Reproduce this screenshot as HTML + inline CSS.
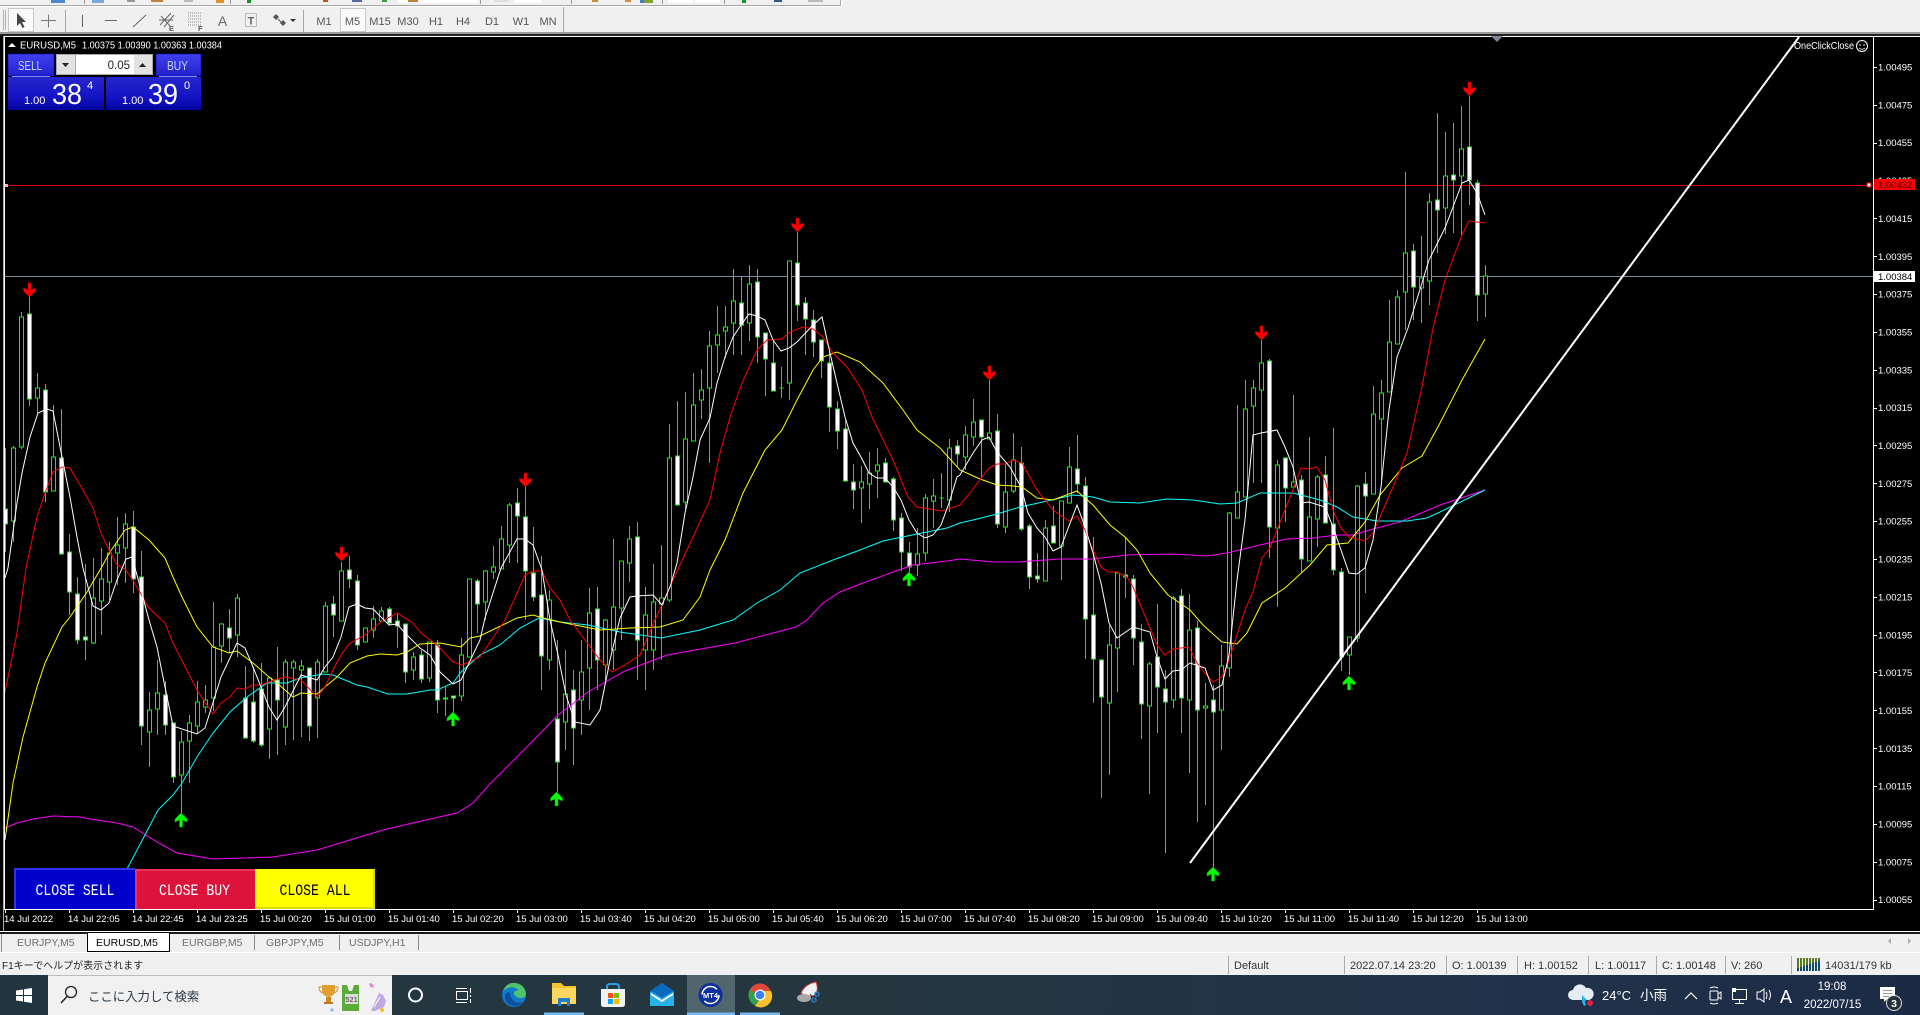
<!DOCTYPE html>
<html><head><meta charset="utf-8"><title>EURUSD,M5</title>
<style>
html,body{margin:0;padding:0;background:#f0f0f0;width:1920px;height:1015px;overflow:hidden}
svg{display:block;position:absolute;left:0;top:0}
text{font-family:"Liberation Sans","Noto Sans CJK JP",sans-serif}
.ax text,.ax{fill:#fff;font-size:9.5px}
.tb{fill:#555;font-size:11px;text-anchor:middle}
.st{fill:#333;font-size:11px}
.tab{fill:#6d6d6d;font-size:10.5px}
.mono{font-family:"Liberation Mono",monospace;font-size:15.5px}
</style></head><body>
<svg width="1920" height="1015" viewBox="0 0 1920 1015" xmlns="http://www.w3.org/2000/svg">
<defs>
<clipPath id="cc"><rect x="5" y="37" width="1868" height="872"/></clipPath>
<linearGradient id="gu" x1="0" y1="0" x2="0" y2="1"><stop offset="0" stop-color="#4040f0"/><stop offset="1" stop-color="#2222cc"/></linearGradient>
<linearGradient id="gl" x1="0" y1="0" x2="0" y2="1"><stop offset="0" stop-color="#2626cc"/><stop offset=".6" stop-color="#1414c4"/><stop offset="1" stop-color="#0404a0"/></linearGradient>
<linearGradient id="tk" x1="0" y1="0" x2="1" y2="0"><stop offset="0" stop-color="#223540"/><stop offset=".45" stop-color="#25363f"/><stop offset=".75" stop-color="#21344a"/><stop offset="1" stop-color="#1c2a46"/></linearGradient>
</defs>

<!-- top clipped toolbar -->
<rect x="0" y="0" width="1920" height="36" fill="#f0f0f0"/>
<g>
<rect x="51" y="0" width="14" height="3" fill="#4a8ad0"/><rect x="92" y="0" width="12" height="3" fill="#7aa8d8"/>
<rect x="127" y="0" width="8" height="2" fill="#999"/><rect x="151" y="0" width="12" height="2" fill="#c08040"/>
<rect x="184" y="0" width="9" height="2" fill="#bbb"/><rect x="216" y="0" width="8" height="3" fill="#e09030"/>
<rect x="84" y="0" width="1" height="4" fill="#999"/><rect x="230" y="0" width="1" height="4" fill="#999"/>
<rect x="247" y="0" width="4" height="3" fill="#0a9a20"/><rect x="323" y="0" width="5" height="2" fill="#c05020"/>
<rect x="352" y="0" width="10" height="2" fill="#556a9a"/><rect x="382" y="0" width="5" height="2" fill="#30a040"/>
<rect x="398" y="0" width="80" height="3" fill="#fff"/><rect x="408" y="0" width="10" height="2" fill="#c08030"/>
<rect x="480" y="0" width="1" height="4" fill="#999"/><rect x="494" y="0" width="14" height="2" fill="#ddd"/><rect x="515" y="0" width="26" height="3" fill="#fff"/>
<rect x="571" y="0" width="1" height="4" fill="#999"/><rect x="592" y="0" width="6" height="2" fill="#c09040"/><rect x="625" y="0" width="6" height="2" fill="#d09040"/>
<rect x="640" y="0" width="4" height="3" fill="#3a80c8"/><rect x="644" y="0" width="9" height="3" fill="#80a030"/>
<rect x="662" y="0" width="1" height="4" fill="#999"/><rect x="668" y="0" width="25" height="3" fill="#fff"/><rect x="695" y="0" width="25" height="3" fill="#fff"/>
<rect x="724" y="0" width="1" height="4" fill="#999"/><rect x="742" y="0" width="4" height="3" fill="#0a9a20"/><rect x="774" y="0" width="8" height="2" fill="#2a5a90"/><rect x="808" y="0" width="15" height="2" fill="#bbb"/>
<path d="M0 5.5H840.5V0" fill="none" stroke="#a8a8a8"/><path d="M0 6.5H841.5V0" fill="none" stroke="#fff"/>
</g>
<!-- second toolbar -->
<rect x="3" y="10" width="1" height="20" fill="#b0b0b0"/><rect x="5" y="10" width="1" height="20" fill="#b0b0b0"/>
<rect x="8.5" y="8.5" width="25" height="23" fill="#fafafa" stroke="#c8c8c8"/>
<path d="M17 13V26L20 23L22.500 28L24.500 27L22 22H26Z" fill="#444"/>
<path d="M48.500 14.500V27.500M41 20.500H56" stroke="#777" fill="none"/>
<rect x="65" y="10" width="1" height="22" fill="#a8a8a8"/>
<path d="M82.500 15V27" stroke="#666"/><path d="M105 20.500H117" stroke="#666"/><path d="M133 27L146 15" stroke="#666"/>
<path d="M160 25L171 13M164 27L174 15M161 16L170 26M159 20L173 20" stroke="#666" fill="none"/><text x="169" y="31" font-size="7.500" font-weight="bold" fill="#555">E</text>
<path d="M188 13h14M188 16h14M188 19h14M188 22h14M188 25h14" stroke="#888" stroke-dasharray="1 1"/><text x="198" y="31" font-size="7.500" font-weight="bold" fill="#555">F</text>
<text x="222.500" y="26" font-size="14" fill="#666" text-anchor="middle">A</text>
<rect x="245.500" y="13.500" width="11" height="13" fill="none" stroke="#888" stroke-dasharray="1 1"/><text x="251" y="24.500" font-size="11" fill="#666" font-weight="bold" text-anchor="middle">T</text>
<path d="M276 14l3 3-3 3-3-3zM283 20l3 3-3 3-3-3z" fill="#555"/><path d="M278 19L283 24" stroke="#555"/><path d="M290 19h6l-3 3z" fill="#333"/>
<rect x="303" y="10" width="1" height="22" fill="#a8a8a8"/>
<rect x="340.500" y="8.500" width="25" height="23" fill="#fafafa" stroke="#c8c8c8"/>
<g class="tb"><text x="324" y="25">M1</text><text x="352.500" y="25">M5</text><text x="380" y="25">M15</text><text x="408" y="25">M30</text><text x="436" y="25">H1</text><text x="463" y="25">H4</text><text x="492" y="25">D1</text><text x="521" y="25">W1</text><text x="548" y="25">MN</text></g>
<rect x="563" y="7" width="1" height="25" fill="#a8a8a8"/>
<rect x="0" y="32" width="1920" height="2" fill="#9a9a9a"/>
<rect x="0" y="34" width="1920" height="2" fill="#222"/>

<!-- chart -->
<rect x="0" y="36" width="1920" height="897" fill="#000"/>
<rect x="3" y="36" width="1" height="896" fill="#aaa"/>
<rect x="4" y="36" width="1916" height="1" fill="#fff"/>
<rect x="4" y="36" width="1" height="874" fill="#fff"/>
<rect x="4" y="909" width="1870" height="1" fill="#fff"/>
<rect x="1873" y="36" width="1" height="874" fill="#fff"/>
<rect x="0" y="931" width="1920" height="1" fill="#fff"/>

<g clip-path="url(#cc)">
<rect x="5" y="276" width="1868" height="1" fill="#7f8c99"/>
<rect x="5" y="185" width="1868" height="1" fill="#e00000"/>

<path fill="none" stroke="#1ee01e" d="M5.5 448V552M13.5 446V542M21.5 312V449M29.5 297V406M37.5 373V413M45.5 384V502M53.5 405V491M61.5 409V554M69.5 534V615M77.5 577V644M85.5 564V660M93.5 558V644M101.5 548V635M109.5 542V600M117.5 517V585M125.5 513V583M133.5 511V593M141.5 551V745M149.5 692V767M157.5 660V735M165.5 681V735M173.5 723V783M181.5 731V813M189.5 715V783M197.5 681V733M205.5 685V713M213.5 602V711M221.5 623V663M229.5 609V653M237.5 594V657M245.5 666V738M253.5 667V743M261.5 663V747M269.5 677V759M277.5 647V755M285.5 659V745M293.5 660V740M301.5 660V737M309.5 668V741M317.5 659V738M325.5 602V672M333.5 596V637M341.5 562V621M349.5 556V588M357.5 575V650M365.5 628V642M373.5 606V638M381.5 607V621M389.5 607V625M397.5 613V648M405.5 624V683M413.5 652V680M421.5 650V683M429.5 642V682M437.5 640V713M445.5 687V716M453.5 696V712M461.5 638V701M469.5 579V657M477.5 579V633M485.5 570V620M493.5 546V579M501.5 526V569M509.5 503V563M517.5 488V563M525.5 487V620M533.5 527V601M541.5 556V690M549.5 590V670M557.5 640V792M565.5 650V750M573.5 670V765M581.5 640V735M589.5 588V710M597.5 587V690M605.5 619V680M613.5 539V670M621.5 561V640M629.5 526V582M637.5 522V680M645.5 587V690M653.5 564V670M661.5 545V660M669.5 424V602M677.5 401V505M685.5 392V509M693.5 373V441M701.5 369V419M709.5 331V463M717.5 306V373M725.5 306V358M733.5 269V355M741.5 276V355M749.5 265V341M757.5 269V363M765.5 333V396M773.5 340V391M781.5 367V398M789.5 261V400M797.5 232V321M805.5 297V355M813.5 310V357M821.5 340V378M829.5 350V432M837.5 401V449M845.5 420V481M853.5 464V509M861.5 466V523M869.5 452V509M877.5 448V498M885.5 458V482M893.5 477V531M901.5 513V571M909.5 542V572M917.5 528V576M925.5 494V561M933.5 479V528M941.5 473V508M949.5 439V512M957.5 440V467M965.5 426V470M973.5 399V446M981.5 420V478M989.5 380V439M997.5 414V528M1005.5 464V533M1013.5 433V493M1021.5 447V531M1029.5 524V589M1037.5 553V583M1045.5 520V581M1053.5 506V543M1061.5 501V580M1069.5 447V503M1077.5 435V493M1085.5 477V659M1093.5 537V703M1101.5 659V798M1109.5 625V775M1117.5 573V692M1125.5 537V598M1133.5 575V665M1141.5 624V739M1149.5 662V794M1157.5 604V733M1165.5 670V853M1173.5 596V708M1181.5 589V733M1189.5 594V773M1197.5 621V822M1205.5 683V805M1213.5 685V867M1221.5 645V750M1229.5 512V677M1237.5 405V518M1245.5 380V497M1253.5 380V483M1261.5 340V483M1269.5 359V558M1277.5 460V607M1285.5 458V522M1293.5 395V487M1301.5 475V572M1309.5 437V561M1317.5 475V547M1325.5 456V523M1333.5 428V575M1341.5 568V671M1349.5 637V675M1357.5 485V642M1365.5 472V593M1373.5 386V494M1381.5 380V480M1389.5 300V392M1397.5 290V344M1405.5 172V330M1413.5 244V320M1421.5 236V323M1429.5 193V305M1437.5 113V253M1445.5 132V234M1453.5 123V233M1461.5 106V235M1469.5 96V205M1477.5 180V321M1485.5 265V317"/>

<!-- hollow bodies -->
<path fill="#000" stroke="#12f012" d="M11.5 448H15.5V521H11.5ZM19.5 317H23.5V447H19.5ZM35.5 388H39.5V398H35.5ZM51.5 457H55.5V491H51.5ZM91.5 598H95.5V643H91.5ZM99.5 579H103.5V601H99.5ZM107.5 553H111.5V582H107.5ZM115.5 545H119.5V553H115.5ZM123.5 524H127.5V548H123.5ZM147.5 710H151.5V732H147.5ZM155.5 693H159.5V709H155.5ZM179.5 742H183.5V775H179.5ZM187.5 723H191.5V741H187.5ZM195.5 702H199.5V726H195.5ZM203.5 700H207.5V707H203.5ZM211.5 647H215.5V698H211.5ZM219.5 624H223.5V646H219.5ZM235.5 598H239.5V635H235.5ZM267.5 678H271.5V729H267.5ZM283.5 662H287.5V727H283.5ZM291.5 662H295.5V668H291.5ZM299.5 666H303.5V670H299.5ZM315.5 662H319.5V698H315.5ZM323.5 606H327.5V672H323.5ZM339.5 571H343.5V621H339.5ZM363.5 628H367.5V642H363.5ZM371.5 619H375.5V630H371.5ZM379.5 611H383.5V621H379.5ZM411.5 657H415.5V670H411.5ZM427.5 642H431.5V678H427.5ZM443.5 698H447.5V699H443.5ZM459.5 655H463.5V696H459.5ZM467.5 579H471.5V657H467.5ZM483.5 571H487.5V602H483.5ZM491.5 567H495.5V572H491.5ZM499.5 539H503.5V569H499.5ZM507.5 505H511.5V545H507.5ZM547.5 600H551.5V660H547.5ZM563.5 694H567.5V722H563.5ZM579.5 672H583.5V700H579.5ZM587.5 613H591.5V668H587.5ZM603.5 620H607.5V665H603.5ZM611.5 607H615.5V650H611.5ZM619.5 561H623.5V608H619.5ZM627.5 539H631.5V563H627.5ZM643.5 615H647.5V650H643.5ZM651.5 602H655.5V650H651.5ZM659.5 598H663.5V604H659.5ZM667.5 458H671.5V600H667.5ZM683.5 439H687.5V502H683.5ZM691.5 405H695.5V441H691.5ZM699.5 390H703.5V400H699.5ZM707.5 346H711.5V388H707.5ZM715.5 335H719.5V345H715.5ZM723.5 327H727.5V331H723.5ZM731.5 301H735.5V323H731.5ZM747.5 284H751.5V323H747.5ZM779.5 388H783.5V388H779.5ZM787.5 261H791.5V383H787.5ZM859.5 482H863.5V488H859.5ZM867.5 473H871.5V484H867.5ZM875.5 465H879.5V471H875.5ZM915.5 554H919.5V565H915.5ZM923.5 498H927.5V553H923.5ZM931.5 496H935.5V501H931.5ZM939.5 498H943.5V498H939.5ZM947.5 448H951.5V500H947.5ZM963.5 435H967.5V457H963.5ZM971.5 422H975.5V437H971.5ZM987.5 433H991.5V439H987.5ZM1003.5 492H1007.5V527H1003.5ZM1011.5 460H1015.5V491H1011.5ZM1043.5 528H1047.5V581H1043.5ZM1059.5 501H1063.5V546H1059.5ZM1067.5 467H1071.5V503H1067.5ZM1107.5 645H1111.5V703H1107.5ZM1115.5 573H1119.5V648H1115.5ZM1147.5 664H1151.5V706H1147.5ZM1171.5 598H1175.5V700H1171.5ZM1187.5 630H1191.5V700H1187.5ZM1203.5 706H1207.5V708H1203.5ZM1219.5 666H1223.5V710H1219.5ZM1227.5 513H1231.5V668H1227.5ZM1235.5 492H1239.5V518H1235.5ZM1243.5 409H1247.5V497H1243.5ZM1251.5 388H1255.5V406H1251.5ZM1259.5 363H1263.5V390H1259.5ZM1275.5 465H1279.5V528H1275.5ZM1291.5 482H1295.5V487H1291.5ZM1307.5 517H1311.5V561H1307.5ZM1315.5 477H1319.5V519H1315.5ZM1347.5 637H1351.5V655H1347.5ZM1355.5 486H1359.5V638H1355.5ZM1371.5 414H1375.5V494H1371.5ZM1379.5 393H1383.5V419H1379.5ZM1387.5 342H1391.5V392H1387.5ZM1395.5 297H1399.5V344H1395.5ZM1403.5 253H1407.5V292H1403.5ZM1419.5 278H1423.5V288H1419.5ZM1427.5 202H1431.5V281H1427.5ZM1443.5 176H1447.5V208H1443.5ZM1459.5 149H1463.5V176H1459.5ZM1483.5 276H1487.5V294H1483.5Z"/>
<!-- filled bodies -->
<path fill="#fff" stroke="#12f012" d="M3.5 509H7.5V524H3.5ZM27.5 314H31.5V399H27.5ZM43.5 390H47.5V492H43.5ZM59.5 458H63.5V554H59.5ZM67.5 552H71.5V592H67.5ZM75.5 594H79.5V640H75.5ZM83.5 637H87.5V640H83.5ZM131.5 527H135.5V579H131.5ZM139.5 577H143.5V726H139.5ZM163.5 695H167.5V725H163.5ZM171.5 723H175.5V777H171.5ZM227.5 628H231.5V638H227.5ZM243.5 698H247.5V738H243.5ZM251.5 702H255.5V741H251.5ZM259.5 689H263.5V745H259.5ZM275.5 680H279.5V700H275.5ZM307.5 668H311.5V726H307.5ZM331.5 604H335.5V615H331.5ZM347.5 570H351.5V579H347.5ZM355.5 581H359.5V645H355.5ZM387.5 609H391.5V623H387.5ZM395.5 621H399.5V626H395.5ZM403.5 624H407.5V672H403.5ZM419.5 655H423.5V679H419.5ZM435.5 645H439.5V700H435.5ZM451.5 696H455.5V698H451.5ZM475.5 581H479.5V604H475.5ZM515.5 503H519.5V516H515.5ZM523.5 517H527.5V571H523.5ZM531.5 573H535.5V597H531.5ZM539.5 595H543.5V656H539.5ZM555.5 719H559.5V762H555.5ZM571.5 690H575.5V728H571.5ZM595.5 609H599.5V660H595.5ZM635.5 537H639.5V640H635.5ZM675.5 456H679.5V505H675.5ZM739.5 303H743.5V325H739.5ZM755.5 282H759.5V337H755.5ZM763.5 333H767.5V359H763.5ZM771.5 363H775.5V391H771.5ZM795.5 263H799.5V305H795.5ZM803.5 303H807.5V319H803.5ZM811.5 320H815.5V342H811.5ZM819.5 340H823.5V361H819.5ZM827.5 363H831.5V407H827.5ZM835.5 409H839.5V431H835.5ZM843.5 429H847.5V481H843.5ZM851.5 482H855.5V490H851.5ZM883.5 463H887.5V482H883.5ZM891.5 479H895.5V520H891.5ZM899.5 518H903.5V552H899.5ZM907.5 553H911.5V567H907.5ZM955.5 446H959.5V454H955.5ZM979.5 420H983.5V437H979.5ZM995.5 431H999.5V524H995.5ZM1019.5 463H1023.5V529H1019.5ZM1027.5 526H1031.5V577H1027.5ZM1035.5 576H1039.5V579H1035.5ZM1051.5 526H1055.5V543H1051.5ZM1075.5 469H1079.5V484H1075.5ZM1083.5 486H1087.5V619H1083.5ZM1091.5 615H1095.5V659H1091.5ZM1099.5 660H1103.5V697H1099.5ZM1123.5 575H1127.5V577H1123.5ZM1131.5 579H1135.5V638H1131.5ZM1139.5 642H1143.5V704H1139.5ZM1155.5 657H1159.5V687H1155.5ZM1163.5 689H1167.5V702H1163.5ZM1179.5 596H1183.5V698H1179.5ZM1195.5 628H1199.5V710H1195.5ZM1211.5 700H1215.5V712H1211.5ZM1267.5 361H1271.5V527H1267.5ZM1283.5 458H1287.5V488H1283.5ZM1299.5 480H1303.5V559H1299.5ZM1323.5 475H1327.5V523H1323.5ZM1331.5 524H1335.5V570H1331.5ZM1339.5 572H1343.5V657H1339.5ZM1363.5 484H1367.5V496H1363.5ZM1411.5 251H1415.5V287H1411.5ZM1435.5 200H1439.5V210H1435.5ZM1451.5 175H1455.5V180H1451.5ZM1467.5 147H1471.5V180H1467.5ZM1475.5 183H1479.5V295H1475.5Z"/>

<!-- MAs -->
<polyline fill="none" stroke="#ff00ff" points="5,828 17,823 33,819 53,816 80,817 90,819 117,823 133,827 157,842 177,853 213,859 273,857 317,850 340,843 383,830 417,822 457,813 473,803 490,784 527,747 557,716 588,692 625,671 667,655 735,643 796,627 807,620 823,603 840,592 863,583 893,572 913,565 947,561 960,559 993,562 1017,562 1060,559 1093,559 1127,555 1173,554 1207,556 1227,553 1260,545 1287,539 1313,538 1337,535 1353,535 1377,528 1400,522 1440,505 1485,490"/>
<polyline fill="none" stroke="#00ffff" points="127,869 145,835 158,810 173,795 182,783 197,757 213,733 230,712 247,697 267,683 287,683 300,678 323,674 333,675 357,685 367,687 388,694 407,694 430,690 437,690 453,683 461,672 480,655 500,645 520,628 539,618 560,622 588,625 620,632 661,638 700,630 733,620 757,603 780,590 800,573 833,560 860,550 883,541 917,534 947,528 960,523 973,520 997,514 1020,507 1043,502 1073,495 1093,497 1110,502 1140,503 1167,499 1193,500 1220,504 1237,503 1260,493 1293,493 1320,500 1337,507 1353,517 1377,521 1407,521 1427,518 1440,512 1485,490"/>
<polyline fill="none" stroke="#ffff00" points="5,840 13,783 23,737 37,687 45,663 62,627 70,617 87,592 100,570 110,552 125,530 133,527 149,540 165,558 173,577 182,597 197,627 213,647 229,653 237,651 253,663 269,677 277,683 293,697 301,693 317,694 325,687 337,677 350,663 367,656 380,654 397,655 407,652 420,644 440,643 461,647 470,638 480,636 517,618 533,615 543,618 560,622 600,630 630,628 660,627 683,620 700,597 710,570 725,540 743,493 765,450 782,430 797,400 813,370 823,357 837,352 860,362 883,383 903,410 917,430 940,448 960,470 980,479 997,485 1013,486 1022,487 1037,498 1053,500 1077,491 1093,505 1110,525 1125,537 1137,550 1150,573 1168,595 1190,610 1203,625 1222,642 1237,644 1247,633 1262,603 1285,588 1310,565 1327,545 1348,543 1365,522 1380,495 1402,468 1422,456 1440,423 1462,380 1485,339"/>
<polyline fill="none" stroke="#ff0000" points="5,692 17,633 26,568 37,517 45,493 53,472 62,467 70,468 83,490 93,508 101,533 109,550 117,565 125,569 133,580 149,608 165,623 173,643 197,690 213,714 221,703 230,697 237,688 245,689 253,685 261,685 277,679 285,677 301,680 317,697 325,687 333,670 341,655 349,644 365,635 381,622 397,613 413,623 421,633 437,645 453,662 462,665 480,657 505,620 525,575 533,571 542,571 550,588 560,600 570,620 585,640 600,660 612,672 625,665 640,655 655,620 673,580 693,537 710,500 720,453 730,417 742,383 757,350 767,340 782,339 790,332 803,327 813,329 823,337 833,353 847,367 862,390 872,417 893,460 908,497 917,507 942,511 960,505 970,493 989,468 997,464 1005,464 1013,460 1022,463 1037,490 1053,510 1069,521 1077,516 1085,530 1093,550 1101,567 1109,572 1117,572 1127,577 1133,587 1157,645 1165,655 1173,649 1189,647 1197,663 1205,673 1213,682 1222,677 1229,660 1245,610 1253,592 1262,558 1270,548 1277,530 1293,490 1301,468 1309,469 1317,467 1325,480 1333,510 1341,528 1349,537 1365,541 1373,533 1393,487 1407,453 1422,387 1433,328 1445,280 1462,235 1469,221 1477,222 1485,223"/>
<polyline fill="none" stroke="#ffffff" points="5,578 8,568 17,503 22,473 30,437 38,413 47,409 53,411 62,457 70,497 77,537 83,568 93,606 101,610 109,603 117,580 126,559 132,557 141,590 149,620 157,647 165,687 173,726 197,734 205,728 221,677 237,643 245,648 253,667 261,687 269,707 277,720 285,707 301,675 317,680 325,667 333,657 341,637 349,607 357,604 365,608 373,609 389,625 397,624 405,633 420,648 430,655 440,672 453,684 461,680 480,640 485,618 501,568 517,539 525,539 533,545 542,570 550,620 558,655 566,695 575,722 590,725 600,710 610,660 620,618 630,597 637,596 653,595 662,605 670,587 677,563 685,513 693,477 700,440 710,418 717,383 725,357 733,337 741,325 749,314 757,316 765,320 773,340 781,351 789,348 797,342 813,325 822,317 830,353 837,383 845,417 853,443 861,457 869,473 877,478 885,478 893,487 901,500 909,520 917,533 925,538 933,535 941,525 949,503 957,477 960,475 973,453 982,440 989,437 997,452 1010,467 1021,487 1028,513 1037,528 1045,537 1053,551 1061,547 1077,505 1085,527 1093,553 1101,583 1109,623 1117,638 1133,627 1150,632 1157,657 1165,679 1173,671 1181,670 1190,663 1205,668 1213,690 1222,685 1229,655 1237,580 1245,520 1253,435 1261,433 1277,430 1285,447 1293,467 1301,503 1309,502 1325,507 1333,527 1341,550 1349,573 1357,574 1365,568 1373,540 1381,487 1389,410 1397,357 1408,328 1422,283 1429,260 1445,228 1453,207 1462,183 1469,180 1477,193 1485,215"/>
<line x1="1190" y1="863" x2="1799" y2="37" stroke="#fff" stroke-width="2"/>

<!-- signal arrows -->
<g fill="#ff0000" stroke="#c00000" stroke-width=".5">
<path d="M-1.5-14H1.5V-7L6-9V-6L0 0-6-6V-9L-1.5-7Z" transform="translate(29.5 297)"/>
<path d="M-1.5-14H1.5V-7L6-9V-6L0 0-6-6V-9L-1.5-7Z" transform="translate(341.5 561)"/>
<path d="M-1.5-14H1.5V-7L6-9V-6L0 0-6-6V-9L-1.5-7Z" transform="translate(525.5 487)"/>
<path d="M-1.5-14H1.5V-7L6-9V-6L0 0-6-6V-9L-1.5-7Z" transform="translate(797.5 232)"/>
<path d="M-1.5-14H1.5V-7L6-9V-6L0 0-6-6V-9L-1.5-7Z" transform="translate(989.5 380)"/>
<path d="M-1.5-14H1.5V-7L6-9V-6L0 0-6-6V-9L-1.5-7Z" transform="translate(1261.5 340)"/>
<path d="M-1.5-14H1.5V-7L6-9V-6L0 0-6-6V-9L-1.5-7Z" transform="translate(1469.5 96)"/>
</g>
<g fill="#00ff00" stroke="#00b000" stroke-width=".5">
<path d="M-1.5 14H1.5V7L6 9V6L0 0-6 6V9L-1.5 7Z" transform="translate(181 813)"/>
<path d="M-1.5 14H1.5V7L6 9V6L0 0-6 6V9L-1.5 7Z" transform="translate(453 712)"/>
<path d="M-1.5 14H1.5V7L6 9V6L0 0-6 6V9L-1.5 7Z" transform="translate(556.5 792)"/>
<path d="M-1.5 14H1.5V7L6 9V6L0 0-6 6V9L-1.5 7Z" transform="translate(909 572)"/>
<path d="M-1.5 14H1.5V7L6 9V6L0 0-6 6V9L-1.5 7Z" transform="translate(1213 867)"/>
<path d="M-1.5 14H1.5V7L6 9V6L0 0-6 6V9L-1.5 7Z" transform="translate(1349 676)"/>
</g>
</g>

<path d="M1491 36h12l-6 6z" fill="#7c8894"/>
<rect x="1867" y="183" width="4" height="4" fill="#fff" stroke="#e00000"/>
<rect x="5" y="184" width="3" height="3" fill="#ffb0b0"/>

<!-- header and trading panel -->
<path d="M8 47l4-4 4 4z" fill="#fff"/>
<text x="20" y="48.500" font-size="10.500" fill="#fff" textLength="56" lengthAdjust="spacingAndGlyphs">EURUSD,M5</text>
<text x="82" y="48.500" font-size="10.500" fill="#fff" textLength="140" lengthAdjust="spacingAndGlyphs">1.00375 1.00390 1.00363 1.00384</text>

<rect x="8" y="54" width="46" height="22" fill="url(#gu)" stroke="#0000a8" stroke-width=".5"/>
<rect x="156" y="54" width="45" height="22" fill="url(#gu)" stroke="#0000a8" stroke-width=".5"/>
<rect x="8" y="77" width="96" height="33" fill="url(#gl)"/>
<rect x="106" y="77" width="95" height="33" fill="url(#gl)"/>
<rect x="12" y="76" width="38" height="1" fill="#8a8af0"/>
<rect x="159" y="76" width="38" height="1" fill="#8a8af0"/>
<rect x="56" y="54" width="97" height="21" fill="#a8a8a8"/>
<rect x="57" y="55" width="18" height="19" fill="#e2e2e2"/>
<rect x="76" y="55" width="58" height="19" fill="#fff"/>
<rect x="134" y="55" width="18" height="19" fill="#e2e2e2"/>
<path d="M62 63h7l-3.500 4z" fill="#222"/><path d="M139 67h7l-3.500-4z" fill="#222"/>
<text x="130" y="69" font-size="11.500" fill="#222" text-anchor="end">0.05</text>
<text x="18" y="70" font-size="13" fill="#c8d4ff" textLength="24" lengthAdjust="spacingAndGlyphs">SELL</text>
<text x="167" y="70" font-size="13" fill="#c8d4ff" textLength="21" lengthAdjust="spacingAndGlyphs">BUY</text>
<text x="24" y="104" font-size="11" fill="#fff">1.00</text>
<text x="52" y="104" font-size="29" fill="#fff" textLength="30" lengthAdjust="spacingAndGlyphs">38</text>
<text x="87" y="89" font-size="11" fill="#fff">4</text>
<text x="122" y="104" font-size="11" fill="#fff">1.00</text>
<text x="148" y="104" font-size="29" fill="#fff" textLength="30" lengthAdjust="spacingAndGlyphs">39</text>
<text x="184" y="89" font-size="11" fill="#fff">0</text>

<!-- OneClickClose -->
<text x="1794" y="49" font-size="10" fill="#fff" textLength="60" lengthAdjust="spacingAndGlyphs">OneClickClose</text>
<circle cx="1862" cy="46" r="5.500" fill="none" stroke="#fff"/><circle cx="1860" cy="45" r=".7" fill="#fff"/><circle cx="1864" cy="45" r=".7" fill="#fff"/><path d="M1859 48q3 2.500 6 0" fill="none" stroke="#fff" stroke-width=".8"/>

<!-- close buttons -->
<rect x="15" y="869" width="120" height="40" fill="#0000cd"/><path d="M15 909V869H135" fill="none" stroke="#3232e6" stroke-width="2"/>
<rect x="135" y="869" width="120" height="40" fill="#dc143c"/><path d="M136 909V870H255" fill="none" stroke="#f03058" stroke-width="2"/>
<rect x="255" y="869" width="120" height="40" fill="#ffff00"/><path d="M255 908H374V869" fill="none" stroke="#dcdc00" stroke-width="2"/>
<text x="35.500" y="895" class="mono" fill="#fff" textLength="79" lengthAdjust="spacingAndGlyphs">CLOSE SELL</text>
<text x="159" y="895" class="mono" fill="#fff" textLength="71" lengthAdjust="spacingAndGlyphs">CLOSE BUY</text>
<text x="279.500" y="895" class="mono" fill="#000" textLength="71" lengthAdjust="spacingAndGlyphs">CLOSE ALL</text>

<!-- price axis -->
<path fill="none" stroke="#fff" d="M1874 67.500h3M1874 105.500h3M1874 143.500h3M1874 181.500h3M1874 218.500h3M1874 256.500h3M1874 294.500h3M1874 332.500h3M1874 370.500h3M1874 408.500h3M1874 445.500h3M1874 483.500h3M1874 521.500h3M1874 559.500h3M1874 597.500h3M1874 635.500h3M1874 672.500h3M1874 710.500h3M1874 748.500h3M1874 786.500h3M1874 824.500h3M1874 862.500h3M1874 900.500h3"/>
<g class="ax">
<text x="1878" y="70.500">1.00495</text><text x="1878" y="108.400">1.00475</text><text x="1878" y="146.200">1.00455</text><text x="1878" y="184.100">1.00435</text><text x="1878" y="221.900">1.00415</text><text x="1878" y="259.800">1.00395</text><text x="1878" y="297.600">1.00375</text><text x="1878" y="335.500">1.00355</text><text x="1878" y="373.300">1.00335</text><text x="1878" y="411.200">1.00315</text><text x="1878" y="449">1.00295</text><text x="1878" y="486.900">1.00275</text><text x="1878" y="524.700">1.00255</text><text x="1878" y="562.600">1.00235</text><text x="1878" y="600.400">1.00215</text><text x="1878" y="638.300">1.00195</text><text x="1878" y="676.100">1.00175</text><text x="1878" y="714">1.00155</text><text x="1878" y="751.800">1.00135</text><text x="1878" y="789.700">1.00115</text><text x="1878" y="827.500">1.00095</text><text x="1878" y="865.400">1.00075</text><text x="1878" y="903.200">1.00055</text>
</g>
<rect x="1874" y="179" width="41" height="11" fill="#ff0000"/>
<text x="1878" y="188" font-size="9.500" fill="#4a0000">1.00432</text>
<rect x="1874" y="271" width="41" height="11" fill="#fff"/>
<text x="1878" y="280" font-size="9.500" fill="#000">1.00384</text>

<!-- time axis -->
<path fill="none" stroke="#fff" d="M5.500 910v3M69.500 910v3M133.500 910v3M197.500 910v3M261.500 910v3M325.500 910v3M389.500 910v3M453.500 910v3M517.500 910v3M581.500 910v3M645.500 910v3M709.500 910v3M773.500 910v3M837.500 910v3M901.500 910v3M965.500 910v3M1029.500 910v3M1093.500 910v3M1157.500 910v3M1221.500 910v3M1285.500 910v3M1349.500 910v3M1413.500 910v3M1477.500 910v3"/>
<g class="ax">
<text x="4" y="922">14 Jul 2022</text><text x="68" y="922">14 Jul 22:05</text><text x="132" y="922">14 Jul 22:45</text><text x="196" y="922">14 Jul 23:25</text><text x="260" y="922">15 Jul 00:20</text><text x="324" y="922">15 Jul 01:00</text><text x="388" y="922">15 Jul 01:40</text><text x="452" y="922">15 Jul 02:20</text><text x="516" y="922">15 Jul 03:00</text><text x="580" y="922">15 Jul 03:40</text><text x="644" y="922">15 Jul 04:20</text><text x="708" y="922">15 Jul 05:00</text><text x="772" y="922">15 Jul 05:40</text><text x="836" y="922">15 Jul 06:20</text><text x="900" y="922">15 Jul 07:00</text><text x="964" y="922">15 Jul 07:40</text><text x="1028" y="922">15 Jul 08:20</text><text x="1092" y="922">15 Jul 09:00</text><text x="1156" y="922">15 Jul 09:40</text><text x="1220" y="922">15 Jul 10:20</text><text x="1284" y="922">15 Jul 11:00</text><text x="1348" y="922">15 Jul 11:40</text><text x="1412" y="922">15 Jul 12:20</text><text x="1476" y="922">15 Jul 13:00</text>
</g>

<!-- tabs -->
<rect x="0" y="932" width="1920" height="2" fill="#1a1a1a"/>
<rect x="0" y="934" width="1920" height="41" fill="#f0f0f0"/>
<rect x="1" y="934" width="1" height="18" fill="#8a8a8a"/>
<rect x="87.500" y="932.500" width="82" height="19" fill="#fff" stroke="#000"/>
<text x="17" y="946" class="tab">EURJPY,M5</text>
<text x="96" y="946" font-size="10.500" fill="#000">EURUSD,M5</text>
<text x="182" y="946" class="tab">EURGBP,M5</text>
<rect x="254" y="935" width="1" height="15" fill="#888"/>
<text x="266" y="946" class="tab">GBPJPY,M5</text>
<rect x="339" y="935" width="1" height="15" fill="#888"/>
<text x="349" y="946" class="tab">USDJPY,H1</text>
<rect x="418" y="935" width="1" height="15" fill="#888"/>
<path d="M1891 938v6l-3-3zM1908 938v6l3-3z" fill="#aaa"/>
<rect x="0" y="952" width="1920" height="1" fill="#fff"/>

<!-- status bar -->
<text x="2" y="969" font-size="10" fill="#222">F1キーでヘルプが表示されます</text>
<g fill="#aaa"><rect x="1228" y="956" width="1" height="18"/><rect x="1344" y="956" width="1" height="18"/><rect x="1446" y="956" width="1" height="18"/><rect x="1517" y="956" width="1" height="18"/><rect x="1588" y="956" width="1" height="18"/><rect x="1656" y="956" width="1" height="18"/><rect x="1725" y="956" width="1" height="18"/><rect x="1791" y="956" width="1" height="18"/></g>
<g class="st">
<text x="1234" y="969">Default</text>
<text x="1350" y="969">2022.07.14 23:20</text>
<text x="1452" y="969">O: 1.00139</text>
<text x="1524" y="969">H: 1.00152</text>
<text x="1595" y="969">L: 1.00117</text>
<text x="1662" y="969">C: 1.00148</text>
<text x="1731" y="969">V: 260</text>
<text x="1825" y="969">14031/179 kb</text>
</g>
<g fill="#5a7a20"><rect x="1797" y="958" width="2" height="13"/><rect x="1800" y="958" width="2" height="13"/><rect x="1803" y="958" width="2" height="13"/><rect x="1806" y="958" width="2" height="13"/><rect x="1809" y="958" width="2" height="13"/><rect x="1812" y="958" width="2" height="13"/><rect x="1815" y="958" width="2" height="13"/><rect x="1818" y="958" width="2" height="13"/></g>
<g fill="#0e4a6a"><rect x="1797" y="968" width="2" height="3"/><rect x="1800" y="967" width="2" height="4"/><rect x="1803" y="966" width="2" height="5"/><rect x="1806" y="965" width="2" height="6"/><rect x="1809" y="964" width="2" height="7"/><rect x="1812" y="963" width="2" height="8"/><rect x="1815" y="962" width="2" height="9"/><rect x="1818" y="961" width="2" height="10"/></g>

<!-- taskbar -->
<rect x="0" y="975" width="1920" height="40" fill="url(#tk)"/>
<path d="M16 990.500L23 989.500V995H16ZM24 989.300L32 988V995H24ZM16 996H23V1001.500L16 1000.500ZM24 996H32V1003L24 1001.700Z" fill="#fff"/>
<rect x="48" y="975" width="344" height="40" fill="#f1f1f1"/>
<rect x="48" y="975" width="344" height="1" fill="#bbb"/>
<circle cx="71" cy="992" r="5.500" fill="none" stroke="#222" stroke-width="1.300"/><path d="M67 996.500L61 1003" stroke="#222" stroke-width="1.500"/>
<text x="88" y="1001" font-size="12.400" fill="#2b3a48">ここに入力して検索</text>
<!-- search decorations -->
<path d="M322 985h13v5q0 6-6.500 7-6.500-1-6.500-7z" fill="#e0a030"/><path d="M322 987h-3q0 5 4 6M335 987h3q0 5-4 6" fill="none" stroke="#d09030"/><rect x="326" y="997" width="5" height="6" fill="#d08a20"/><rect x="324" y="1002" width="9" height="2" fill="#c07820"/>
<circle cx="332" cy="1010" r="1.800" fill="#8cc4f0"/>
<path d="M342 985h5l2 6h3l2-6h5v26h-17z" fill="#5caa3a"/><rect x="345" y="994" width="13" height="10" fill="#ddd"/><text x="351.500" y="1002" font-size="7.500" text-anchor="middle" fill="#333">521</text>
<path d="M371 1011l8-18 4 2 3 6-2 6-9 4z" fill="#c0a8e0"/><path d="M374 1007l6-10" stroke="#fff"/>
<path d="M369 983l4 1 1 4-4-1z" fill="#e88cd0"/><circle cx="382" cy="1010" r="2" fill="#f0c030"/>
<circle cx="415.500" cy="995" r="6.500" fill="none" stroke="#fff" stroke-width="2"/>
<path d="M456 988.500h11M456 1002.500h11" stroke="#fff"/><rect x="456.500" y="991.500" width="11" height="8" fill="none" stroke="#fff"/><path d="M470.500 988v5M470.500 995v2M470.500 999v4" stroke="#fff"/>
<!-- edge -->
<circle cx="514" cy="995" r="12" fill="#0f7bc8"/><path d="M503 991q4-9 12-8 9 1 11 10 0 5-5 5-5 0-7-4 0-4 5-4-8-6-16 1z" fill="#4fc46a"/><path d="M505 995q0 10 9 11 6 0 10-4-7 2-11-2-3-3-3-7-3-2-5 2z" fill="#0b4f9c"/>
<!-- explorer -->
<path d="M552 983h9l3 3h12v18h-24z" fill="#f4c430"/><rect x="552" y="988" width="24" height="16" fill="#ffd75e"/><path d="M558 1006v-8h12v8h-3v-4h-6v4z" fill="#1f7fd0"/>
<rect x="544" y="1012.500" width="40" height="2.500" fill="#76b9ed"/>
<!-- store -->
<path d="M601 989h24v15q0 3-3 3h-18q-3 0-3-3z" fill="#f2f2f2"/><path d="M607 989v-2q0-3 3-3h6q3 0 3 3v2" fill="none" stroke="#2ba0e8" stroke-width="2"/>
<rect x="608" y="993" width="5" height="5" fill="#f25022"/><rect x="614" y="993" width="5" height="5" fill="#7fba00"/><rect x="608" y="999" width="5" height="5" fill="#00a4ef"/><rect x="614" y="999" width="5" height="5" fill="#ffb900"/>
<!-- mail -->
<path d="M650 992l12-9 12 9v14h-24z" fill="#29b1ea"/><path d="M650 991l12-8 12 8-12 7z" fill="#0b6ac0"/><path d="M651 993l11 7 11-7v2l-11 7-11-7z" fill="#fff"/>
<!-- MT4 -->
<rect x="687" y="975" width="48" height="40" fill="#50656c"/>
<rect x="687" y="1012.500" width="48" height="2.500" fill="#76b9ed"/>
<circle cx="710.500" cy="995" r="12" fill="#0d2fa0"/><circle cx="710.500" cy="995" r="8.500" fill="none" stroke="#fff" stroke-width="1.500" stroke-dasharray="20 7"/>
<text x="710.500" y="998" font-size="7.500" font-weight="bold" fill="#fff" text-anchor="middle">MT4</text>
<!-- chrome -->
<circle cx="760" cy="995" r="11.500" fill="#e0483a"/><path d="M750 989.500A11.500 11.500 0 0 0 756 1006l5.500-8z" fill="#32a04c"/><path d="M771 991A11.500 11.500 0 0 1 755 1006l6-8 1-7z" fill="#fbc02d"/><circle cx="760" cy="995" r="5.500" fill="#fff"/><circle cx="760" cy="995" r="4.300" fill="#3c7ff0"/>
<rect x="740" y="1012.500" width="40" height="2.500" fill="#76b9ed"/>
<!-- snipping -->
<path d="M801 993q4-9 15-11 3 8-1 13-8 3-14-2z" fill="#f2f2f2" stroke="#d84040"/><ellipse cx="804" cy="998" rx="7" ry="4" fill="#a8a8a8"/><circle cx="814" cy="1000" r="2" fill="none" stroke="#2080d0" stroke-width="1.500"/><circle cx="817" cy="994" r="2" fill="none" stroke="#2080d0" stroke-width="1.500"/><path d="M810 994l6 8" stroke="#444"/>

<!-- tray -->
<path d="M1573 1000a5 5 0 0 1 0-10 7 7 0 0 1 13-2 6 6 0 0 1 3 12z" fill="#e4ecf4"/><path d="M1582 995l5 5-2 1 1 4-2 1-2-4z" fill="#2ab0e8"/><circle cx="1590" cy="1003" r="3" fill="#e02040"/>
<text x="1602" y="1000" font-size="13" fill="#fff">24°C</text>
<text x="1640" y="1000" font-size="13.500" fill="#fff">小雨</text>
<path d="M1685 999l6-6 6 6" fill="none" stroke="#fff" stroke-width="1.200"/>
<rect x="1710" y="991" width="8" height="9" rx="1" fill="none" stroke="#fff"/><path d="M1718 994l3-2v7l-3-2M1710 988q4-2 8 0M1710 1003q4 2 8 0" fill="none" stroke="#fff"/>
<rect x="1732.500" y="989.500" width="14" height="10" fill="none" stroke="#fff"/><rect x="1732" y="988" width="4" height="4" fill="#fff"/><path d="M1739.500 1000v3M1735 1003.500h9" stroke="#fff" fill="none"/>
<path d="M1757 992h3l4-3v13l-4-3h-3z" fill="none" stroke="#fff"/><path d="M1766 992q2 3 0 7M1769 990q3 5 0 10" fill="none" stroke="#fff"/>
<text x="1780" y="1003" font-size="18" fill="#fff" textLength="12" lengthAdjust="spacingAndGlyphs">A</text>
<text x="1832" y="990" font-size="11.500" fill="#fff" text-anchor="middle">19:08</text>
<text x="1832.500" y="1008" font-size="11.500" fill="#fff" text-anchor="middle">2022/07/15</text>
<path d="M1880 987h15v12h-8l-3 3v-3h-4z" fill="#fff"/><path d="M1883 990.500h9M1883 993.500h9M1883 996.500h6" stroke="#777" stroke-width=".8"/>
<circle cx="1894" cy="1003" r="7.500" fill="#23303a" stroke="#ddd"/><text x="1894" y="1007" font-size="10.500" font-weight="bold" fill="#fff" text-anchor="middle">3</text>
</svg>
</body></html>
